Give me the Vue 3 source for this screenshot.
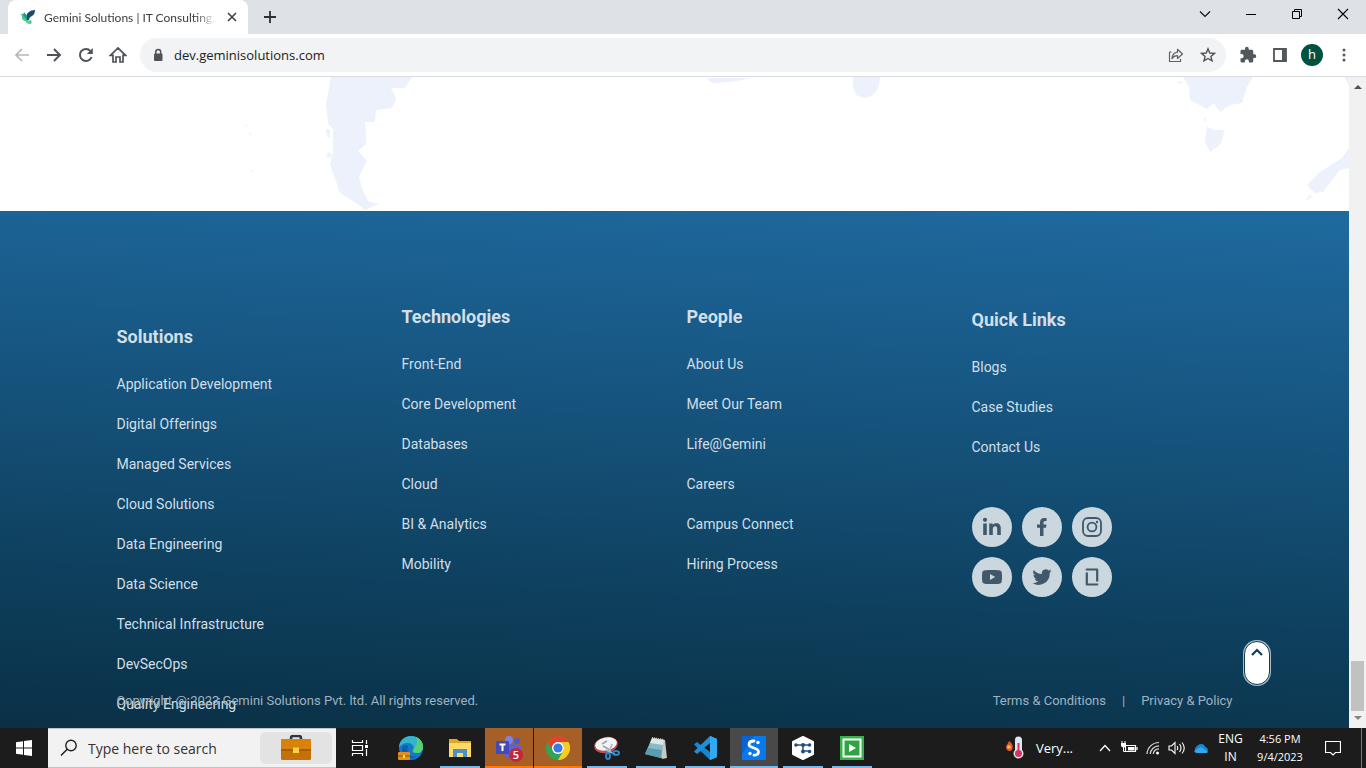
<script setup>
import { ref } from 'vue'

const address = ref('dev.geminisolutions.com')
const query = ref('')

const columns = [
  {
    id: 'solutions',
    title: 'Solutions',
    links: [
      'Application Development', 'Digital Offerings', 'Managed Services', 'Cloud Solutions',
      'Data Engineering', 'Data Science', 'Technical Infrastructure', 'DevSecOps', 'Quality Engineering'
    ]
  },
  {
    id: 'technologies',
    title: 'Technologies',
    links: ['Front-End', 'Core Development', 'Databases', 'Cloud', 'BI & Analytics', 'Mobility']
  },
  {
    id: 'people',
    title: 'People',
    links: ['About Us', 'Meet Our Team', 'Life@Gemini', 'Careers', 'Campus Connect', 'Hiring Process']
  },
  { id: 'quick', title: 'Quick Links', links: ['Blogs', 'Case Studies', 'Contact Us'] }
]
</script>

<template>
  <div class="desktop">
    <header class="tabstrip">
      <div class="tab">
        <svg class="favicon" viewBox="0 0 16 16" width="16" height="16" aria-hidden="true">
          <path d="M15 1C10 1 6 4 6 9c0 2 1 3 3 2 0-2 1-3 3-4 2-1 3-3 3-6z" fill="#1d4a6e" />
          <path d="M0 5c2-1 4 0 6 3l1 4c-3 0-5-1-5-4C2 6 1 5 0 5z" fill="#3fc48a" />
          <path d="M4 3l3 4 0 4-4-5z" fill="#1c9a86" />
          <path d="M4 10c2 2 4 2 7 1 1 2 1 4-1 4s-5-2-6-5z" fill="#4fcf92" />
        </svg>
        <span class="tab-title">Gemini Solutions | IT Consulting,</span>
        <button class="bare tab-close" type="button" aria-label="Close tab">
          <svg viewBox="0 0 10 10" width="10" height="10"><path d="M1 1l8 8M9 1l-8 8" stroke="#3c4043" stroke-width="1.6" /></svg>
        </button>
      </div>
      <button class="bare new-tab" type="button" aria-label="New tab">
        <svg viewBox="0 0 12 12" width="12" height="12"><path d="M6 0v12M0 6h12" stroke="#2c2f33" stroke-width="1.8" /></svg>
      </button>
      <div class="window-controls">
        <button class="bare" type="button" aria-label="Search tabs">
          <svg viewBox="0 0 12 12" width="12" height="12"><path d="M1 3.5l5 5 5-5" fill="none" stroke="#111" stroke-width="1.200" /></svg>
        </button>
        <button class="bare" type="button" aria-label="Minimize">
          <svg viewBox="0 0 12 12" width="12" height="12"><path d="M1 6.5h10" stroke="#000" /></svg>
        </button>
        <button class="bare" type="button" aria-label="Restore">
          <svg viewBox="0 0 12 12" width="12" height="12"><path d="M1.5 3.5h7v7h-7zM3.5 3.5v-2h7v7h-2" fill="none" stroke="#000" /></svg>
        </button>
        <button class="bare" type="button" aria-label="Close">
          <svg viewBox="0 0 12 12" width="12" height="12"><path d="M1 1l10 10M11 1L1 11" stroke="#000" stroke-width="1.1" /></svg>
        </button>
      </div>
    </header>

    <nav class="toolbar" aria-label="Browser">
      <button class="bare tool" type="button" aria-label="Back">
        <svg viewBox="0 0 16 16" width="16" height="16"><path d="M15 8H2M8 2L2 8l6 6" fill="none" stroke="#b4b7ba" stroke-width="1.7" /></svg>
      </button>
      <button class="bare tool" type="button" aria-label="Forward">
        <svg viewBox="0 0 16 16" width="16" height="16"><path d="M1 8h13M8 2l6 6-6 6" fill="none" stroke="#4f5357" stroke-width="1.9" /></svg>
      </button>
      <button class="bare tool" type="button" aria-label="Reload">
        <svg viewBox="0 0 16 16" width="16" height="16">
          <path d="M13.6 10A6 6 0 1 1 12.4 3.9" fill="none" stroke="#4f5357" stroke-width="2" />
          <path d="M14.8 1v6H8.8z" fill="#4f5357" />
        </svg>
      </button>
      <button class="bare tool" type="button" aria-label="Home">
        <svg viewBox="0 0 18 18" width="18" height="18"><path d="M1.500 9.300L9 2l7.500 7.300H14V16H11V11H7V16H4V9.300z" fill="none" stroke="#4f5357" stroke-width="1.700" /></svg>
      </button>
      <div class="omnibox">
        <svg viewBox="0 0 14 14" width="14" height="14" aria-hidden="true">
          <rect x="3" y="5.500" width="8.500" height="7.500" rx="1" fill="#4f5357" />
          <path d="M4.800 6V4a2.450 2.450 0 0 1 4.900 0v2" fill="none" stroke="#4f5357" stroke-width="1.5" />
        </svg>
        <input v-model="address" class="address" type="text" aria-label="Address" />
        <button class="bare tool" type="button" aria-label="Share">
          <svg viewBox="0 0 16 16" width="16" height="16"><path d="M3.500 5H1.500v9.500h11V12M9.500 5.200V2.300l5 4.700-5 4.500V8.600C7 8.600 5.300 9.500 4 11.700 4.300 8 6.300 5.600 9.500 5.200z" fill="none" stroke="#5f6368" stroke-width="1.2" stroke-linejoin="round" /></svg>
        </button>
        <button class="bare tool" type="button" aria-label="Bookmark">
          <svg viewBox="0 0 16 16" width="16" height="16"><path d="M8 1.800l1.800 4.200 4.600.4-3.500 3 1.100 4.500L8 11.500l-4 2.400 1.100-4.500-3.500-3 4.600-.4z" fill="none" stroke="#4f5357" stroke-width="1.400" /></svg>
        </button>
      </div>
      <button class="bare tool" type="button" aria-label="Extensions">
        <svg viewBox="0 0 24 24" width="18" height="18"><path fill="#53575b" d="M20.500 11H19V7c0-1.100-.9-2-2-2h-4V3.500a2.500 2.500 0 0 0-5 0V5H4c-1.100 0-2 .9-2 2v3.800h1.500a2.700 2.700 0 0 1 0 5.400H2V20c0 1.100.9 2 2 2h3.800v-1.500a2.700 2.700 0 0 1 5.400 0V22H17c1.100 0 2-.9 2-2v-4h1.500a2.500 2.500 0 0 0 0-5z" /></svg>
      </button>
      <button class="bare tool" type="button" aria-label="Side panel">
        <svg viewBox="0 0 14 14" width="14" height="14"><path d="M1 1h12v12H1z" fill="none" stroke="#53575b" stroke-width="1.800" /><path d="M9 1h4v12H9z" fill="#53575b" /></svg>
      </button>
      <button class="bare tool" type="button" aria-label="Profile"><span class="avatar">h</span></button>
      <button class="bare tool" type="button" aria-label="Menu">
        <svg viewBox="0 0 4 14" width="4" height="14"><g fill="#53575b"><circle cx="2" cy="2" r="1.500" /><circle cx="2" cy="7" r="1.500" /><circle cx="2" cy="12" r="1.500" /></g></svg>
      </button>
    </nav>

    <div class="viewport">
      <main class="page">
        <section class="map" aria-label="World map">
          <svg viewBox="0 0 1349 134" width="100%" height="134" preserveAspectRatio="none">
            <g fill="#edf1fc">
              <path d="M331 0H412L405 11L391 11L396 22L392 31L376 33L375 45L365 45L366 54L366 67L358 74L367 84L359 99L362 112L368 124L379 127L365 133L353 124L340 116L335 101L330 87L333 76V52L328 46L326 27z" />
              <path d="M708 1l42 0-13 3-20 2c-5 0-8-1-9-5zM853 0h27c0 8-3 15-8 19l-8 2-8-3-3-8z" />
              <path d="M1183 0H1253L1247 10L1242 26L1230 28L1220 35L1214 26L1207 32L1190 23L1189 10zM1207 50L1214 53L1225 53L1220 68L1210 75L1205 65zM1349 71V91L1340 93L1323 115L1315 116L1307 108L1320 95L1342 81zM1177 5l5-1-1 3zM1310 118l2 1-4 4-2-1zM1344 0l5 0v9zM1204 41l2 1-1 4z" />
              <path d="M245 47l3 2-2 1zM249 55l3 2-2 1zM251 93l3 1-2 1zM326 52h4v8h-3zM328 75l4 2-1 4-5-1z" />
            </g>
          </svg>
        </section>

        <footer class="footer">
          <div class="columns">
            <section v-for="col in columns" :key="col.id" class="column" :class="col.id">
              <h2>{{ col.title }}</h2>
              <ul>
                <li v-for="link in col.links" :key="link"><a href="#">{{ link }}</a></li>
              </ul>
              <div v-if="col.id === 'quick'" class="socials">
                <a href="#" aria-label="LinkedIn">
                  <svg viewBox="0 0 20 20" width="20" height="20"><circle cx="3" cy="2.800" r="2.100" /><path d="M1.200 6.500h3.600V18H1.200zM7.200 6.500h3.400V8c.8-1.200 2-1.800 3.700-1.800 3.300 0 4.500 2 4.500 5.300V18h-3.600v-5.800c0-1.700-.5-2.900-2-2.900-1.700 0-2.400 1.200-2.400 2.900V18H7.200z" /></svg>
                </a>
                <a href="#" aria-label="Facebook">
                  <svg viewBox="0 0 20 20" width="20" height="20"><path d="M8 19v-8.200H5V7.500h3V5.400C8 2.500 9.700 1 12.300 1c1.200 0 2.300.1 2.300.1V4h-1.400c-1.300 0-1.700.8-1.700 1.600v1.900h3l-.5 3.300h-2.500V19z" /></svg>
                </a>
                <a href="#" aria-label="Instagram">
                  <svg viewBox="0 0 20 20" width="20" height="20"><g fill="none" stroke="#405869" stroke-width="1.800"><rect x="1" y="1" width="18" height="18" rx="5" /><circle cx="10" cy="10" r="4.400" /></g><circle cx="15" cy="5" r="1.200" /></svg>
                </a>
                <a href="#" aria-label="YouTube">
                  <svg viewBox="0 0 20 20" width="20" height="20"><path fill-rule="evenodd" d="M3 3.300c3-.5 11-.5 14 0 2 .2 2.700 1.200 2.800 3 .3 2.500.3 5 0 7.400-.1 1.800-.8 2.800-2.800 3-3 .5-11 .5-14 0-2-.2-2.700-1.200-2.800-3-.3-2.500-.3-5 0-7.400.1-1.800.8-2.800 2.800-3zM8 7v6l5.200-3z" /></svg>
                </a>
                <a href="#" aria-label="Twitter">
                  <svg viewBox="0 0 24 24" width="20" height="20"><path d="M23.600 4.900c-.8.400-1.700.6-2.700.8 1-.6 1.700-1.500 2-2.600-.9.500-1.900.9-3 1.100a4.700 4.700 0 0 0-8 4.300C8 8.300 4.500 6.400 2.200 3.500a4.700 4.700 0 0 0 1.500 6.300c-.8 0-1.500-.2-2.100-.6 0 2.300 1.600 4.200 3.800 4.700-.7.200-1.400.2-2.100.1.600 1.900 2.300 3.200 4.400 3.200A9.400 9.400 0 0 1 .7 19.200a13.300 13.300 0 0 0 20.500-11.900c.9-.7 1.700-1.500 2.400-2.400z" /></svg>
                </a>
                <a href="#" aria-label="Glassdoor">
                  <svg viewBox="0 0 20 20" width="20" height="20"><path d="M4.800 5.600V17.500H15.200V16.500M4.800 3.500V2.500H15.200V14.400" fill="none" stroke="#405869" stroke-width="2.200" stroke-linejoin="round" /></svg>
                </a>
              </div>
            </section>
          </div>
          <div class="legal">
            <span class="copyright">Copyright @ 2023 Gemini Solutions Pvt. ltd. All rights reserved.</span>
            <a href="#">Terms &amp; Conditions</a>
            <span class="bar">|</span>
            <a href="#">Privacy &amp; Policy</a>
          </div>
          <button class="to-top" type="button" aria-label="Back to top">
            <svg viewBox="0 0 12 8" width="12" height="8"><path d="M1 7l5-5 5 5" fill="none" stroke="#123f5c" stroke-width="2.200" /></svg>
          </button>
        </footer>
      </main>
      <div class="scrollbar" aria-hidden="true">
        <svg viewBox="0 0 8 5" width="8" height="5"><path d="M0 5l4-4 4 4z" fill="#505050" /></svg>
        <span class="thumb"></span>
        <svg viewBox="0 0 8 5" width="8" height="5"><path d="M0 0l4 4 4-4z" fill="#858585" /></svg>
      </div>
    </div>

    <div class="taskbar">
      <button class="bare start" type="button" aria-label="Start">
        <svg viewBox="0 0 16 16" width="16" height="16"><path fill="#fff" d="M0 2.200l7-1v6.300H0zM8 1.100L16 0v7.500H8zM0 8.500h7v6.300l-7-1zM8 8.500h8V16l-8-1.100z" /></svg>
      </button>
      <div class="search">
        <svg viewBox="0 0 18 18" width="18" height="18" aria-hidden="true"><circle cx="11" cy="6.500" r="5.200" fill="none" stroke="#222" stroke-width="1.400" /><path d="M7.200 10.300L1 16.500" stroke="#222" stroke-width="1.500" /></svg>
        <input v-model="query" type="text" placeholder="Type here to search" aria-label="Type here to search" />
        <span class="highlight">
          <svg viewBox="0 0 32 26" width="32" height="26">
            <path d="M11 5V3q0-2 2-2h6q2 0 2 2v2" fill="none" stroke="#30343c" stroke-width="2.500" />
            <rect x="1" y="4" width="30" height="21" rx="1.500" fill="#c27208" />
            <path d="M1 5q0-1 1-1h28q1 0 1 1v9H1z" fill="#d98208" />
            <path d="M1 14h30v2H1z" fill="#a85c02" />
            <rect x="13" y="12.500" width="6" height="5.500" fill="#ffd23c" />
          </svg>
        </span>
      </div>
      <button class="bare app system" type="button" aria-label="Task View">
        <svg viewBox="0 0 18 16" width="18" height="16"><path d="M1.500 0v2.500h10V0M1.500 16v-2.500h10V16M1.500 5.500h10v5h-10zM15.500 0v4M15.500 9v7" fill="none" stroke="#fff" stroke-width="1.200" /><rect x="14" y="5" width="3" height="3" fill="#fff" /></svg>
      </button>
      <button class="bare app system" type="button" aria-label="Edge">
        <svg viewBox="0 0 26 26" width="26" height="26">
          <circle cx="14" cy="13" r="12" fill="#1479c9" />
          <path d="M2 13C2 5 8 1 14 1c8 0 12 6 12 11 0 4-3 6-6 6-3 0-5-1-4-3 2-4-1-7-5-7-4 0-8 2-9 5z" fill="#35b4cf" />
          <path d="M19 2c5 2 7 6 7 10 0 4-3 6-6 6-3 0-5-1-4-3 4-4 5-8 3-13z" fill="#58cf70" />
          <path d="M11 11c-2 6 1 11 9 11-9 4-15-2-15-8 0-3 3-5 6-3z" fill="#125ca8" />
          <rect x="1" y="17" width="12" height="8" rx="1" fill="#e39019" /><path d="M1 21h12" stroke="#9a5200" /><rect x="6" y="20" width="2" height="3" fill="#ffdc55" />
        </svg>
      </button>
      <button class="bare app running" type="button" aria-label="File Explorer">
        <svg viewBox="0 0 22 20" width="22" height="20"><path d="M0 1h8l2 2h12v16H0z" fill="#e2a721" /><path d="M0 5h22v14H0z" fill="#ffd967" /><path d="M4 19v-8h14v8h-4v-4H8v4z" fill="#4a91c9" /></svg>
      </button>
      <button class="bare app alert" type="button" aria-label="Teams">
        <svg viewBox="0 0 26 26" width="26" height="26">
          <circle cx="13" cy="5" r="4" fill="#7b83eb" /><circle cx="21" cy="6" r="3" fill="#5059c9" />
          <path d="M8 9h11v10q-2 5-7 4-4-1-4-6zM19 10h6v7q-2 5-6 3z" fill="#5b63cf" />
          <rect x="0" y="6" width="13" height="13" rx="1" fill="#444bb5" />
          <path d="M3.500 9.500h6M6.500 9.500V16" stroke="#fff" stroke-width="2" />
        </svg>
        <span class="badge">5</span>
      </button>
      <button class="bare app alert" type="button" aria-label="Chrome">
        <svg viewBox="0 0 24 24" width="24" height="24">
          <circle cx="12" cy="12" r="12" fill="#31a650" />
          <path d="M12 0a12 12 0 0 1 10.400 6H12a6 6 0 0 0-5.200 9L1.600 6A12 12 0 0 1 12 0z" fill="#e8402f" />
          <path d="M22.400 6A12 12 0 0 1 12 24l5.200-9A6 6 0 0 0 12 6z" fill="#fccb1f" />
          <circle cx="12" cy="12" r="6" fill="#fff" /><circle cx="12" cy="12" r="4.600" fill="#3c79e6" />
        </svg>
      </button>
      <button class="bare app running" type="button" aria-label="Snipping Tool">
        <svg viewBox="0 0 26 24" width="26" height="24">
          <ellipse cx="12" cy="9" rx="12" ry="8" fill="#c34b4b" transform="rotate(-12 12 9)" /><ellipse cx="12" cy="8" rx="11" ry="6.500" fill="#f3f3f5" transform="rotate(-12 12 8)" />
          <path d="M8 8l5-3M9 10l7 4" stroke="#9aa4ae" stroke-width="1.500" /><path d="M18 8l-3 9M12 14l9 4" stroke="#a8bccb" stroke-width="1.800" />
          <g fill="none" stroke="#2b87cc" stroke-width="2"><ellipse cx="14" cy="20" rx="2" ry="3" /><ellipse cx="22" cy="17" rx="3" ry="2" /></g>
        </svg>
      </button>
      <button class="bare app running" type="button" aria-label="Notepad">
        <svg viewBox="0 0 24 24" width="24" height="24"><path d="M8 2l13 2 2 18-5 1z" fill="#c5c8c3" /><path d="M8 2l12 2-3 18L1 18z" fill="#87b9c6" /><path d="M8 2l12 2-1 5-13-2z" fill="#d8e8e7" /><path d="M4 12l14 2-1 8-16-4z" fill="#5b9cb0" /><path d="M8 2l12 2" stroke="#d0d0c8" stroke-width="2" stroke-dasharray="1 1" /></svg>
      </button>
      <button class="bare app running" type="button" aria-label="Visual Studio Code">
        <svg viewBox="0 0 24 24" width="24" height="24"><path d="M17 0l7 3v18l-7 3L1 8.500l3-2.500L17 16z" fill="#1686d2" /><path d="M17 0l7 3v18l-7 3V7L4 18l-3-2.500z" fill="#1f8fdc" /><path d="M17 0l7 3v18l-7 3z" fill="#31a9f1" /></svg>
      </button>
      <button class="bare app running current" type="button" aria-label="Sync">
        <svg viewBox="0 0 24 24" width="24" height="24"><path d="M0 0h24v24H0z" fill="#0878ec" /><path d="M0 0h12L0 18z" fill="#0863d4" /><path d="M12 5C8.500 5 7 6.500 7 8.500c0 4 9.500 3 9.500 7 0 2.200-1.500 3.700-4.500 3.700" fill="none" stroke="#fff" stroke-width="2.800" stroke-linecap="round" /><circle cx="16" cy="6.500" r="1.700" fill="#fff" /><circle cx="8" cy="17.500" r="1.700" fill="#fff" /></svg>
      </button>
      <button class="bare app running" type="button" aria-label="Flow">
        <svg viewBox="0 0 24 24" width="24" height="24"><path d="M12 1l10 5v12l-10 5-10-5V6z" fill="#fff" stroke="#fff" stroke-width="2" stroke-linejoin="round" /><path d="M5 9h14M12 9v6h7" fill="none" stroke="#29527d" stroke-width="1.500" /><g fill="#214f82"><circle cx="5" cy="9" r="1.800" /><circle cx="12" cy="9" r="2" /><circle cx="18.500" cy="9" r="1.800" /><circle cx="12" cy="15.500" r="2" /><circle cx="18.500" cy="15.500" r="1.800" /></g></svg>
      </button>
      <button class="bare app running" type="button" aria-label="Recorder">
        <svg viewBox="0 0 24 24" width="24" height="24"><path d="M0 0h24v24H0z" fill="#35b34a" /><path d="M3.500 3.500h17v17h-17z" fill="#2ca542" stroke="#fff" stroke-width="2" /><path d="M9 8v8l7-4z" fill="#fff" /></svg>
      </button>

      <div class="tray">
        <button class="bare weather" type="button">
          <svg viewBox="0 0 20 24" width="20" height="24" aria-hidden="true"><path d="M4 5c3 2 5 5 3 9-2 2-6 1-6-3 0-2 2-3 3-6z" fill="#e4572b" /><circle cx="4" cy="11" r="1.800" fill="#ffc04b" /><path d="M10 4a3.500 3.500 0 0 1 7 0v10a5 5 0 1 1-7 0z" fill="#dce9f5" /><path d="M13.500 7v10" stroke="#d83358" stroke-width="2" /><circle cx="13.500" cy="17.500" r="3.500" fill="#d83358" /></svg>
          <span>Very...</span>
        </button>
        <button class="bare icon" type="button" aria-label="Show hidden icons"><svg viewBox="0 0 12 8" width="12" height="8"><path d="M1 7l5-5.500L11 7" fill="none" stroke="#fff" stroke-width="1.300" /></svg></button>
        <button class="bare icon" type="button" aria-label="Battery"><svg viewBox="0 0 18 14" width="18" height="14"><path d="M5.500 4.500h10v6h-10zM17 6v3" fill="none" stroke="#fff" stroke-width="1.200" /><path d="M8 6h6.500v3.500H8zM1 2h5v3q-2.500 3-5 0z" fill="#fff" /><path d="M2 0v3M5 0v3M3.500 5v5.500H6" fill="none" stroke="#fff" /></svg></button>
        <button class="bare icon" type="button" aria-label="Wi-Fi"><svg viewBox="0 0 14 14" width="14" height="14"><g fill="none" stroke="#d9d9d9" stroke-width="1.200"><path d="M1 13A12 12 0 0 1 13 1.500M4.200 13A9 9 0 0 1 13 4.800M7.200 13A6 6 0 0 1 13 7.800" /></g><circle cx="11.500" cy="12" r="1.500" fill="#fff" /></svg></button>
        <button class="bare icon" type="button" aria-label="Volume"><svg viewBox="0 0 18 14" width="18" height="14"><path d="M1 5h2.500L7 1.500v11L3.500 9H1zM9 5q1.500 2 0 4M11.500 3q3 4 0 8M14 1.500q4.500 5.500 0 11" fill="none" stroke="#fff" stroke-width="1.100" /></svg></button>
        <button class="bare icon" type="button" aria-label="OneDrive"><svg viewBox="0 0 16 12" width="16" height="12"><path d="M4 11a4 4 0 0 1 0-7 5 5 0 0 1 8.500 1A3.200 3.200 0 0 1 13 11z" fill="#1389dd" /><path d="M1 9l7-4 7 5q-1 1-2 1H4q-2 0-3-2z" fill="#35a8ec" /></svg></button>
        <button class="bare lang" type="button"><span>ENG</span><span>IN</span></button>
        <button class="bare clock" type="button"><span>4:56 PM</span><span>9/4/2023</span></button>
        <button class="bare notice" type="button" aria-label="Notifications"><svg viewBox="0 0 16 16" width="16" height="16"><path d="M.5 1.500h15v11h-5L8 15l-2.500-2.500h-5z" fill="none" stroke="#fff" stroke-width="1.200" /></svg></button>
        <span class="peek"></span>
      </div>
    </div>
  </div>
</template>

<style>
body {
  margin: 0;
}
</style>

<style scoped>
.desktop {
  display: flex;
  flex-direction: column;
  height: 100vh;
  overflow: hidden;
  font-family: "Open Sans", "Noto Sans", sans-serif;
  color: #3c4043;
}
.desktop * {
  box-sizing: border-box;
}
svg {
  display: block;
  flex: none;
}
.bare {
  display: flex;
  align-items: center;
  justify-content: center;
  padding: 0;
  border: 0;
  background: none;
  color: inherit;
  font: inherit;
}
a {
  color: inherit;
  text-decoration: none;
}

.tabstrip {
  display: flex;
  flex: none;
  height: 34px;
  padding-left: 8px;
  background: #dee1e6;
}
.tab {
  display: flex;
  align-items: center;
  width: 240px;
  padding: 0 8px 0 12px;
  border-radius: 8px 8px 0 0;
  background: #fff;
}
.tab-title {
  flex: 1;
  margin-left: 8px;
  white-space: nowrap;
  font-family: Lato, "Open Sans", sans-serif;
  font-size: 12px;
  -webkit-mask-image: linear-gradient(90deg, #000 88%, transparent);
  mask-image: linear-gradient(90deg, #000 88%, transparent);
}
.tab-close {
  width: 16px;
  height: 16px;
  margin-left: 8px;
}
.new-tab {
  width: 28px;
  margin-left: 8px;
}
.window-controls {
  display: flex;
  margin-left: auto;
}
.window-controls .bare {
  width: 46px;
  height: 28px;
}

.toolbar {
  display: flex;
  flex: none;
  align-items: center;
  height: 43px;
  padding: 0 6px;
  border-bottom: 1px solid #d9dbde;
  background: #fff;
}
.tool {
  flex: none;
  width: 32px;
  height: 32px;
}
.omnibox {
  display: flex;
  flex: 1;
  align-items: center;
  height: 34px;
  margin: 0 6px;
  padding: 0 2px 0 11px;
  border-radius: 17px;
  background: #f1f3f4;
}
.address {
  flex: 1;
  min-width: 0;
  margin-left: 9px;
  padding: 0;
  border: 0;
  outline: 0;
  background: none;
  color: #202124;
  font: 13px "Open Sans", "Noto Sans", sans-serif;
}
.avatar {
  width: 22px;
  height: 22px;
  border-radius: 50%;
  background: #00513f;
  color: #fff;
  font-size: 13px;
  line-height: 21px;
}

.viewport {
  display: flex;
  flex: 1;
  min-height: 0;
}
.page {
  display: flex;
  flex: 1;
  flex-direction: column;
  min-width: 0;
}
.map {
  flex: none;
  background: #fff;
}
.footer {
  position: relative;
  flex: 1;
  min-height: 0;
  overflow: hidden;
  padding-top: 94px;
  background: linear-gradient(183deg, #1e699e 2%, #15527b 42%, #0e405e 72%, #0a3046 100%);
  color: #d2dfe8;
  font-family: Roboto, "Liberation Sans", sans-serif;
  font-size: 14px;
  line-height: 20px;
}
.columns,
.legal {
  width: 100%;
  max-width: 1140px;
  margin: 0 auto;
  padding-left: 12px;
}
.columns {
  display: flex;
}
.column {
  flex: 0 0 285px;
}
.column.solutions {
  padding-top: 20px;
}
.column.quick {
  padding-top: 3px;
}
h2 {
  margin: 0 0 25px;
  font-size: 18px;
  font-weight: 700;
  line-height: 24px;
}
ul {
  display: flex;
  flex-direction: column;
  gap: 20px;
  margin: 0;
  padding: 0;
  list-style: none;
}
.socials {
  display: grid;
  grid-template-columns: repeat(3, 40px);
  gap: 10px;
  margin-top: 50px;
}
.socials a {
  display: flex;
  align-items: center;
  justify-content: center;
  height: 40px;
  border-radius: 50%;
  background: #cbd7df;
}
.socials svg {
  fill: #405869;
}
.legal {
  position: absolute;
  right: 0;
  bottom: 17px;
  left: 0;
  display: flex;
  padding-right: 12px;
  color: #9fb3c1;
  font-size: 13px;
}
.copyright {
  margin-right: auto;
}
.bar {
  margin: 0 16px;
}
.to-top {
  position: absolute;
  right: 79px;
  bottom: 43px;
  display: flex;
  justify-content: center;
  width: 26px;
  height: 44px;
  padding: 6px 0 0;
  border: 1px solid #0d3b57;
  border-radius: 13px;
  background: #fff;
  box-shadow: 0 0 0 1px #a9bdc9;
}
.scrollbar {
  display: flex;
  flex: none;
  flex-direction: column;
  align-items: center;
  width: 17px;
  padding: 7px 0;
  background: #f1f1f1;
}
.thumb {
  width: 13px;
  height: 50px;
  margin: auto 0 5px;
  background: #c1c1c1;
}

.taskbar {
  display: flex;
  flex: none;
  height: 40px;
  background: #1c1c1c;
  color: #fff;
}
.start {
  width: 48px;
}
.search {
  display: flex;
  align-items: center;
  width: 288px;
  padding: 0 4px 0 12px;
  border: solid #c4c4c4;
  border-width: 1px 0;
  background: #f2f2f2;
}
.search input {
  flex: 1;
  min-width: 0;
  margin-left: 10px;
  padding: 0;
  border: 0;
  outline: 0;
  background: none;
  font: 14px "Open Sans", "Noto Sans", sans-serif;
}
.search input::placeholder {
  color: #333;
  opacity: 1;
}
.highlight {
  display: flex;
  align-items: center;
  justify-content: center;
  width: 72px;
  height: 32px;
  border-radius: 6px;
  background: #e3e3e3;
}
.app {
  position: relative;
  flex: none;
  width: 48px;
  margin-right: 1px;
}
.app.system {
  margin-right: 2px;
}
.running::after {
  content: "";
  position: absolute;
  right: 4px;
  bottom: 0;
  left: 4px;
  height: 2px;
  background: #76b9ed;
}
.current {
  background: #494949;
}
.current::after {
  right: 0;
  left: 0;
}
.alert {
  background: #a65f27;
  box-shadow: inset 0 -2px #ff7800;
}
.badge {
  position: absolute;
  top: 20px;
  left: 24px;
  width: 14px;
  height: 14px;
  border-radius: 50%;
  background: #c4253c;
  font-size: 11px;
  font-weight: 600;
  line-height: 14px;
}
.tray {
  display: flex;
  margin-left: auto;
}
.weather {
  gap: 11px;
  margin-right: 20px;
  font-size: 13px;
}
.icon {
  width: 24px;
}
.lang,
.clock {
  flex-direction: column;
  font-size: 12px;
  line-height: 18px;
}
.lang {
  width: 35px;
}
.clock {
  width: 64px;
  font-size: 11px;
}
.notice {
  width: 42px;
}
.peek {
  width: 5px;
  margin-left: 7px;
  border-left: 1px solid #777;
}
</style>
